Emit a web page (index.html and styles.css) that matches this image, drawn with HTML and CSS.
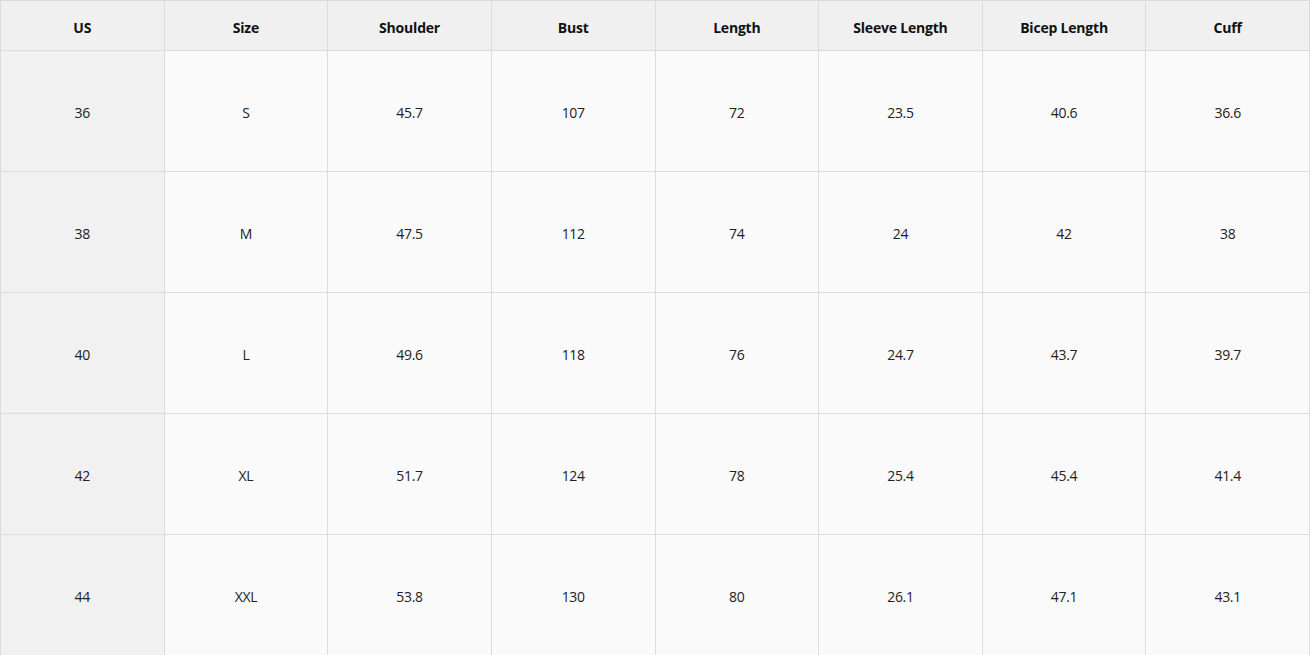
FILE: index.html
```html
<!DOCTYPE html>
<html>
<head>
<meta charset="utf-8">
<link rel="stylesheet" href="styles.css">
</head>
<body>
<table class="size-table">
  <thead>
    <tr>
      <th>US</th><th>Size</th><th>Shoulder</th><th>Bust</th><th>Length</th><th>Sleeve Length</th><th>Bicep Length</th><th>Cuff</th>
    </tr>
  </thead>
  <tbody>
    <tr><td class="first">36</td><td>S</td><td>45.7</td><td>107</td><td>72</td><td>23.5</td><td>40.6</td><td>36.6</td></tr>
    <tr><td class="first">38</td><td>M</td><td>47.5</td><td>112</td><td>74</td><td>24</td><td>42</td><td>38</td></tr>
    <tr><td class="first">40</td><td>L</td><td>49.6</td><td>118</td><td>76</td><td>24.7</td><td>43.7</td><td>39.7</td></tr>
    <tr><td class="first">42</td><td>XL</td><td>51.7</td><td>124</td><td>78</td><td>25.4</td><td>45.4</td><td>41.4</td></tr>
    <tr><td class="first">44</td><td>XXL</td><td>53.8</td><td>130</td><td>80</td><td>26.1</td><td>47.1</td><td>43.1</td></tr>
  </tbody>
</table>
</body>
</html>
```

FILE: styles.css
```css
html, body {
  margin: 0;
  padding: 0;
  background: #ffffff;
}
.size-table {
  width: 1310px;
  border-collapse: collapse;
  table-layout: fixed;
  font-family: "Open Sans", "Noto Sans", "DejaVu Sans", sans-serif;
  font-size: 14px;
  color: #222222;
}
.size-table th,
.size-table td {
  border: 1px solid #dcdcdc;
  text-align: center;
  vertical-align: middle;
  padding: 0;
}
.size-table th {
  height: 46px;
  padding-top: 3px;
  background: #f0f0f0;
  font-weight: 700;
  font-size: 14px;
  color: #111111;
  letter-spacing: -0.2px;
}
.size-table td {
  height: 118px;
  padding-top: 2px;
  background: #fafafa;
  letter-spacing: -0.3px;
}
.size-table td.first {
  background: #f1f1f1;
}
```
